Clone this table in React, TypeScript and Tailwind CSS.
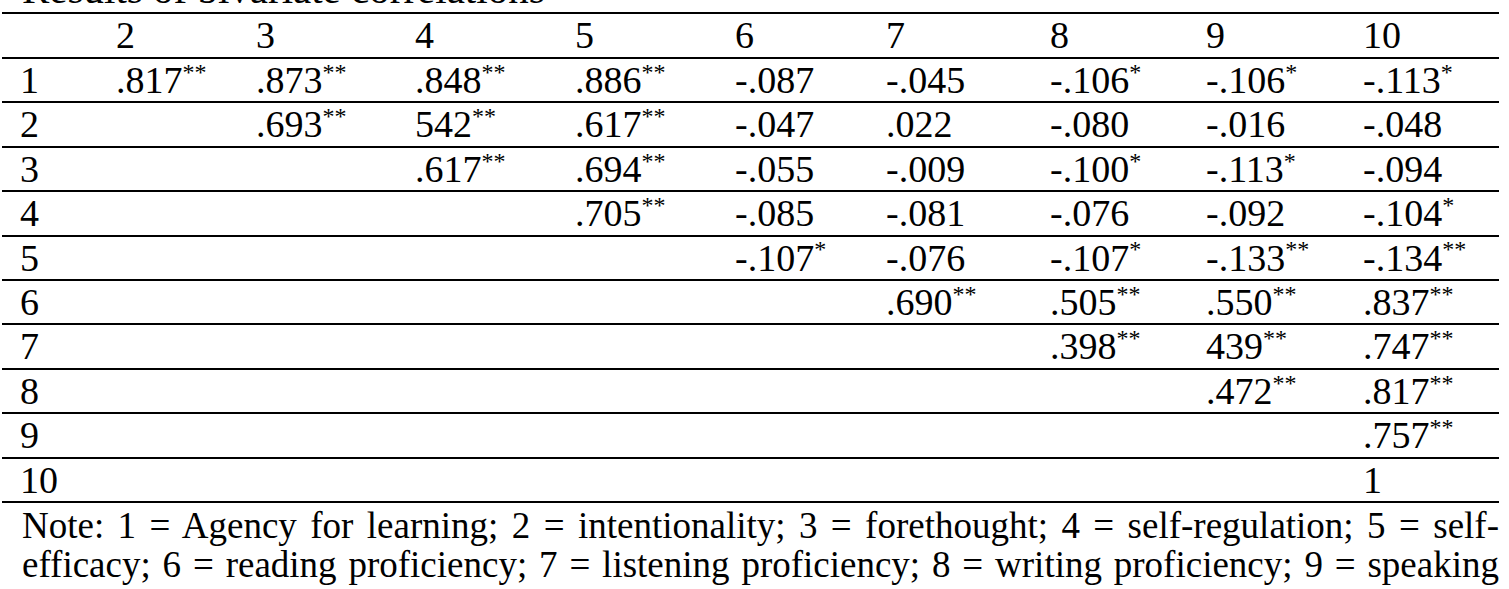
const header = ["2", "3", "4", "5", "6", "7", "8", "9", "10"];

// correlation matrix, upper triangle only ("*" marks significance)
const rows: string[][] = [
  [".817**", ".873**", ".848**", ".886**", "-.087", "-.045", "-.106*", "-.106*", "-.113*"],
  ["", ".693**", "542**", ".617**", "-.047", ".022", "-.080", "-.016", "-.048"],
  ["", "", ".617**", ".694**", "-.055", "-.009", "-.100*", "-.113*", "-.094"],
  ["", "", "", ".705**", "-.085", "-.081", "-.076", "-.092", "-.104*"],
  ["", "", "", "", "-.107*", "-.076", "-.107*", "-.133**", "-.134**"],
  ["", "", "", "", "", ".690**", ".505**", ".550**", ".837**"],
  ["", "", "", "", "", "", ".398**", "439**", ".747**"],
  ["", "", "", "", "", "", "", ".472**", ".817**"],
  ["", "", "", "", "", "", "", "", ".757**"],
  ["", "", "", "", "", "", "", "", "1"],
];

const cols =
  "grid grid-cols-[96px_140px_159px_160px_160px_151px_164px_156px_157px_1fr] pl-[18px]";

function Value({ text }: { text: string }) {
  const stars = text.match(/\*+$/)?.[0] ?? "";
  const num = text.slice(0, text.length - stars.length);
  return (
    <span className="whitespace-nowrap">
      {num}
      {stars && <sup className="text-[24px] top-[-0.55em]">{stars}</sup>}
    </span>
  );
}

export default function App() {
  return (
    <div className="min-h-screen bg-white text-black font-['Liberation_Serif','Times_New_Roman',serif] overflow-hidden">
      {/* Title (scrolled off the top) */}
      <div className="-mt-[32px] ml-[22px] h-[43px] text-[41px] leading-[42px] whitespace-nowrap">
        Results of bivariate correlations
      </div>

      {/* Table */}
      <div className="mt-[1px] ml-[2px] w-[1497px] border-t-2 border-black text-[38px]">
        <div className={`${cols} h-[45px] border-b-2 border-black pt-[2px] leading-[38px]`}>
          <div></div>
          {header.map((h) => (
            <div key={h}>{h}</div>
          ))}
        </div>
        {rows.map((r, i) => (
          <div
            key={i}
            className={`${cols} h-[44.4px] border-b-2 border-black pt-[2px] leading-[38px]`}
          >
            <div>{i + 1}</div>
            {r.map((v, j) => (
              <div key={j}>{v && <Value text={v} />}</div>
            ))}
          </div>
        ))}
      </div>

      {/* Note */}
      <div className="ml-[22px] w-[1477px] pt-[3px] text-[37px] leading-[39px]">
        <div className="text-justify [text-align-last:justify] whitespace-nowrap">
          Note: 1 = Agency for learning; 2 = intentionality; 3 = forethought; 4 =
          self-regulation; 5 = self-
        </div>
        <div className="text-justify [text-align-last:justify] whitespace-nowrap">
          efficacy; 6 = reading proficiency; 7 = listening proficiency; 8 = writing
          proficiency; 9 = speaking
        </div>
      </div>
    </div>
  );
}
